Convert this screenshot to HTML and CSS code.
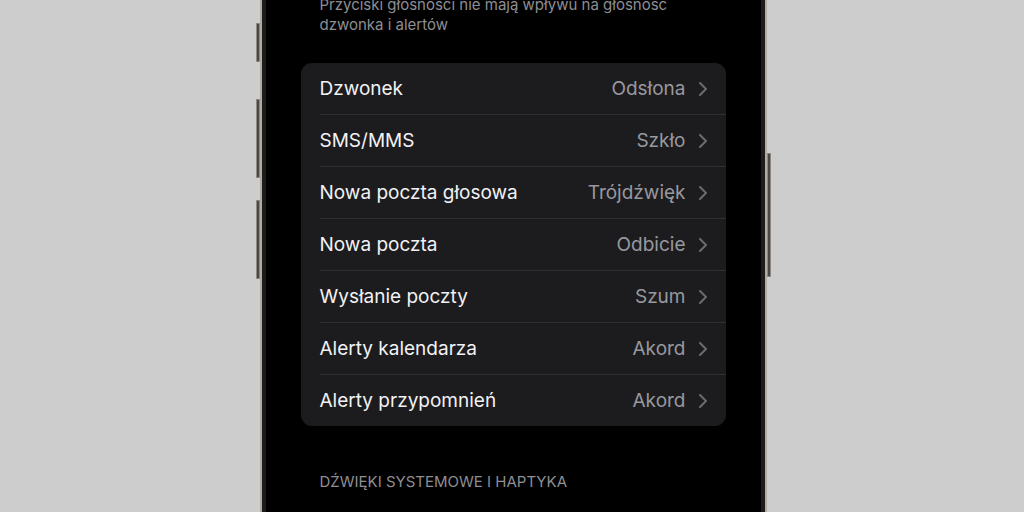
FILE: index.html
```html
<!DOCTYPE html>
<html lang="pl">
  <head>
    <meta charset="UTF-8" />
    <meta name="viewport" content="width=device-width, initial-scale=1" />
    <title>Dźwięki i haptyka</title>
    <link rel="stylesheet" href="styles.css">
  </head>
  <body>
    <div class="stage">
      <div class="phone">
        <span class="side-btn action"></span>
        <span class="side-btn vol-up"></span>
        <span class="side-btn vol-down"></span>
        <span class="side-btn power"></span>

        <div class="screen">
          <p class="note">
            Przyciski głośności nie mają wpływu na głośność dzwonka i alertów
          </p>

          <ul class="group">
            <li class="row">
              <span class="label">Dzwonek</span>
              <span class="value">Odsłona</span>
              <svg class="chevron" viewBox="0 0 8 14"><path d="M1 1l6 6-6 6" /></svg>
            </li>
            <li class="row">
              <span class="label">SMS/MMS</span>
              <span class="value">Szkło</span>
              <svg class="chevron" viewBox="0 0 8 14"><path d="M1 1l6 6-6 6" /></svg>
            </li>
            <li class="row">
              <span class="label">Nowa poczta głosowa</span>
              <span class="value">Trójdźwięk</span>
              <svg class="chevron" viewBox="0 0 8 14"><path d="M1 1l6 6-6 6" /></svg>
            </li>
            <li class="row">
              <span class="label">Nowa poczta</span>
              <span class="value">Odbicie</span>
              <svg class="chevron" viewBox="0 0 8 14"><path d="M1 1l6 6-6 6" /></svg>
            </li>
            <li class="row">
              <span class="label">Wysłanie poczty</span>
              <span class="value">Szum</span>
              <svg class="chevron" viewBox="0 0 8 14"><path d="M1 1l6 6-6 6" /></svg>
            </li>
            <li class="row">
              <span class="label">Alerty kalendarza</span>
              <span class="value">Akord</span>
              <svg class="chevron" viewBox="0 0 8 14"><path d="M1 1l6 6-6 6" /></svg>
            </li>
            <li class="row">
              <span class="label">Alerty przypomnień</span>
              <span class="value">Akord</span>
              <svg class="chevron" viewBox="0 0 8 14"><path d="M1 1l6 6-6 6" /></svg>
            </li>
          </ul>

          <h3 class="section-title">Dźwięki systemowe i haptyka</h3>
          <ul class="group">
            <li class="row"></li>
          </ul>
        </div>
      </div>
    </div>
  </body>
</html>
```

FILE: styles.css
```css
html,
body {
  margin: 0;
  height: 100%;
  overflow: hidden;
}

body {
  background: #cdcdcd;
  font-family: Inter, "Noto Sans", sans-serif;
}

.stage {
  display: flex;
  justify-content: center;
  padding-left: 2px;
}

/* phone body: thin light rim + dark bezel */
.phone {
  position: relative;
  width: 495px;
  height: 600px;
  margin-top: -40px;
  border: 2px solid #b1aba2;
  border-top: none;
  border-bottom: none;
  box-shadow: inset 0 0 0 4px #1d1c1b;
  background: #000;
  padding: 0 4px;
}

.side-btn {
  position: absolute;
  width: 4px;
  background: #4a4846;
  border: 1px solid #8c8781;
  box-sizing: border-box;
}

.action { left: -6px; top: 63px; height: 39px; }
.vol-up { left: -6px; top: 139px; height: 79px; }
.vol-down { left: -6px; top: 240px; height: 79px; }
.power { right: -6px; top: 193px; height: 124px; }

.screen {
  height: 100%;
  padding: 0 35px;
  color: #fff;
}

.note {
  margin: 0;
  padding: 35px 19px 0;
  font-size: 15px;
  line-height: 20px;
  color: #8e8e93;
}

.group {
  list-style: none;
  margin: 28px 0 0;
  padding: 0;
  background: #1c1c1e;
  border-radius: 11px;
  overflow: hidden;
}

.row {
  display: flex;
  align-items: center;
  height: 52px;
  margin-left: 19px;
  padding-right: 19px;
  border-bottom: 1px solid #2f2f31;
  box-sizing: border-box;
}

.row:last-child {
  border-bottom: none;
  height: 51px;
}

.label {
  flex: 1;
  font-size: 19px;
  color: #f2f2f5;
}

.value {
  font-size: 19px;
  color: #98989e;
  margin-right: 13px;
}

.chevron {
  width: 8px;
  height: 14px;
  fill: none;
  stroke: #6b6b70;
  stroke-width: 2;
  stroke-linecap: round;
  stroke-linejoin: round;
}

.section-title {
  margin: 47px 19px 9px;
  font-size: 15px;
  font-weight: 400;
  line-height: 18px;
  text-transform: uppercase;
  color: #8e8e93;
}
```
